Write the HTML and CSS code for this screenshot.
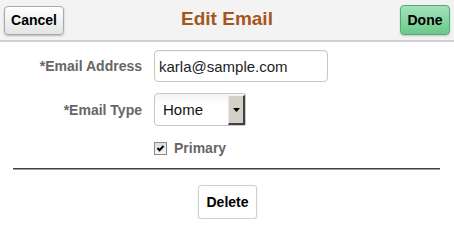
FILE: index.html
```html
<!DOCTYPE html>
<html>
<head>
<meta charset="utf-8">
<link rel="stylesheet" href="styles.css">
</head>
<body>
<header class="bar">
  <div class="bar-left"><button class="btn btn-cancel">Cancel</button></div>
  <h1 class="title">Edit Email</h1>
  <div class="bar-right"><button class="btn btn-done">Done</button></div>
</header>
<main class="form">
  <div class="grid">
    <label class="lbl" for="addr">*Email Address</label>
    <div class="ctl"><input id="addr" class="txt" type="text" value="karla@sample.com"></div>
    <label class="lbl" for="type">*Email Type</label>
    <div class="ctl">
      <div class="sel">
        <span class="sel-val" id="type">Home</span>
        <span class="sel-btn"><svg width="7" height="4" viewBox="0 0 7 4"><path d="M0 0H7L3.5 4Z" fill="#000"/></svg></span>
      </div>
    </div>
    <div class="lbl"></div>
    <div class="ctl chkrow">
      <span class="chk"><svg width="11" height="11" viewBox="0 0 11 11"><path d="M2.5 5L4.5 7.3L8.5 3" fill="none" stroke="#000" stroke-width="2"/></svg></span>
      <span class="chk-lbl">Primary</span>
    </div>
  </div>
  <hr class="rule">
  <div class="actions"><button class="btn btn-delete">Delete</button></div>
</main>
</body>
</html>
```
FILE: styles.css
```css
* { box-sizing: border-box; }
body {
  margin: 0;
  background: #fff;
  font-family: "Liberation Sans", Arial, sans-serif;
}
.bar {
  display: grid;
  grid-template-columns: 1fr auto 1fr;
  align-items: center;
  height: 42px;
  padding: 0 4px 2px;
  background: #f3f3f3;
  border-bottom: 2px solid #d2d2d2;
}
.bar-right { display: flex; justify-content: flex-end; }
.title {
  margin: 0;
  font-size: 19px;
  font-weight: bold;
  color: #a5561d;
}
.btn {
  font-family: "Liberation Sans", Arial, sans-serif;
  font-size: 14px;
  font-weight: bold;
  color: #000;
  padding: 0;
  cursor: pointer;
}
.btn-cancel {
  width: 60px;
  height: 29px;
  margin-top: 2px;
  background: linear-gradient(#fefefe, #e4e4e4);
  border: 1px solid #a9a9a9;
  border-radius: 4px;
  box-shadow: 0 1px 2px rgba(0,0,0,0.25);
}
.btn-done {
  width: 50px;
  height: 30px;
  margin-top: 2px;
  background: linear-gradient(#a4e2ba, #6bc98c);
  border: 1px solid #52ad74;
  border-radius: 4px;
  box-shadow: 0 1px 2px rgba(0,0,0,0.2);
}
.form { padding-top: 8px; }
.grid {
  display: grid;
  grid-template-columns: 142px auto;
  column-gap: 12px;
  row-gap: 11px;
  align-items: center;
}
.lbl {
  text-align: right;
  font-size: 14px;
  font-weight: bold;
  color: #666;
}
.ctl { display: flex; align-items: center; }
.txt {
  width: 174px;
  height: 32px;
  padding: 0 4px;
  font-family: "Liberation Sans", Arial, sans-serif;
  font-size: 15px;
  color: #222;
  border: 1px solid #c8c8c8;
  border-radius: 4px;
  box-shadow: inset 0 1px 2px rgba(0,0,0,0.06);
}
.sel {
  display: flex;
  align-items: stretch;
  width: 92px;
  height: 33px;
  border: 1px solid #c8c8c8;
  border-radius: 4px 2px 2px 4px;
  background: linear-gradient(#f4f4f4, #fff 40%);
}
.sel-val {
  flex: 1;
  display: flex;
  align-items: center;
  padding-left: 8px;
  font-size: 15px;
  color: #111;
}
.sel-btn {
  width: 17px;
  margin: 1px 0 0;
  display: flex;
  align-items: center;
  justify-content: center;
  background: #d4d0c8;
  border-left: 1px solid #eeeae2;
  border-right: 2px solid #404040;
  border-bottom: 2px solid #404040;
  border-top: 1px solid #f4f2ee;
}
.chkrow { height: 20px; gap: 7px; margin-top: 1px; }
.chk {
  width: 13px;
  height: 13px;
  display: flex;
  align-items: center;
  justify-content: center;
  border: 1px solid #8c8c8c;
  background: linear-gradient(#dcdcdc, #f6f6f6);
}
.chk-lbl {
  font-size: 14px;
  font-weight: bold;
  color: #666;
}
.rule {
  margin: 10px 14px 0 13px;
  height: 2px;
  border: 0;
  border-top: 1px solid #3f3f3f;
  border-bottom: 1px solid #a0a0a0;
}
.actions {
  display: flex;
  justify-content: center;
  padding-top: 15px;
}
.btn-delete {
  width: 59px;
  height: 34px;
  margin-left: 1px;
  background: #fff;
  border: 1px solid #d0d0d0;
  border-radius: 3px;
  box-shadow: 0 1px 2px rgba(0,0,0,0.12);
}
```
